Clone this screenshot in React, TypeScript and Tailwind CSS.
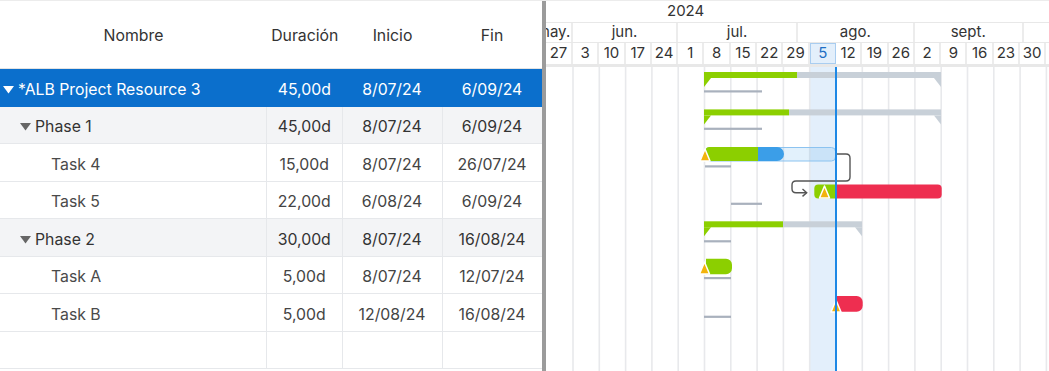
import clsx from "clsx";

type Row = {
  name: string;
  dur: string;
  start: string;
  end: string;
  kind: "root" | "phase" | "task";
};

const rows: Row[] = [
  { name: "*ALB Project Resource 3", dur: "45,00d", start: "8/07/24", end: "6/09/24", kind: "root" },
  { name: "Phase 1", dur: "45,00d", start: "8/07/24", end: "6/09/24", kind: "phase" },
  { name: "Task 4", dur: "15,00d", start: "8/07/24", end: "26/07/24", kind: "task" },
  { name: "Task 5", dur: "22,00d", start: "6/08/24", end: "6/09/24", kind: "task" },
  { name: "Phase 2", dur: "30,00d", start: "8/07/24", end: "16/08/24", kind: "phase" },
  { name: "Task A", dur: "5,00d", start: "8/07/24", end: "12/07/24", kind: "task" },
  { name: "Task B", dur: "5,00d", start: "12/08/24", end: "16/08/24", kind: "task" },
];

const weeks = ["3", "10", "17", "24", "1", "8", "15", "22", "29", "5", "12", "19", "26", "2", "9", "16", "23", "30"];

const GREEN = "#8ccf00";
const GRAY = "#c8d0d8";
const RED = "#ee2e50";

function Caret({ color }: { color: string }) {
  return (
    <svg width="11" height="8" viewBox="0 0 11 8" className="shrink-0">
      <polygon points="0,0 11,0 5.5,7.5" fill={color} />
    </svg>
  );
}

function GridRow({ row }: { row: Row }) {
  const root = row.kind === "root";
  const cell = clsx(
    "flex items-center justify-center border-r pt-[5px]",
    root ? "border-[#0b6fcc]" : "border-[#e6e8eb]"
  );
  return (
    <div
      className={clsx(
        "flex h-[37.5px] shrink-0 border-b text-[15.8px]",
        root && "border-[#0b6fcc] bg-[#0b6fcc] text-white",
        row.kind === "phase" && "border-[#e6e8eb] bg-[#f3f4f6] text-[#333]",
        row.kind === "task" && "border-[#e6e8eb] bg-white text-[#444]"
      )}
    >
      <div className={clsx(cell, "w-[267px] justify-start")}>
        {root && (
          <div className="flex items-center gap-[4px] pl-[3px]">
            <Caret color="#fff" />
            <span>{row.name}</span>
          </div>
        )}
        {row.kind === "phase" && (
          <div className="flex items-center gap-[4px] pl-[20px]">
            <Caret color="#666" />
            <span>{row.name}</span>
          </div>
        )}
        {row.kind === "task" && <span className="pl-[51px] text-[#4a4a4a]">{row.name}</span>}
      </div>
      <div className={clsx(cell, "w-[75.5px]")}>{row.dur}</div>
      <div className={clsx(cell, "w-[100px]")}>{row.start}</div>
      <div className={clsx(cell, "w-[99px] border-r-0")}>{row.end}</div>
    </div>
  );
}

function Summary({ x1, x2, xp, y }: { x1: number; x2: number; xp: number; y: number }) {
  return (
    <g>
      <rect x={x1} y={y} width={xp - x1} height={6} fill={GREEN} />
      <rect x={xp} y={y} width={x2 - xp} height={6} fill={GRAY} />
      <polygon points={`${x1},${y + 6} ${x1 + 7},${y + 6} ${x1},${y + 15}`} fill={GREEN} />
      <polygon points={`${x2},${y + 6} ${x2 - 7},${y + 6} ${x2},${y + 15}`} fill={GRAY} />
    </g>
  );
}

function Baseline({ x1, x2, y }: { x1: number; x2: number; y: number }) {
  return <rect x={x1} y={y} width={x2 - x1} height={2.2} fill="#a9b1bd" />;
}

function Warn({ x, y }: { x: number; y: number }) {
  return (
    <polygon
      points={`${x},${y} ${x - 5},${y + 12} ${x + 5},${y + 12}`}
      fill="#f2b30c"
      stroke="#fff"
      strokeWidth={1.5}
      strokeLinejoin="round"
    />
  );
}

function GanttBody() {
  const lines = Array.from({ length: 19 }, (_, k) => 27 + 26.3 * k);
  return (
    <svg width="503" height="305" className="block">
      <rect x={263.7} y={0} width={25.5} height={305} fill="#e3effb" />
      {lines.map((x) => (
        <rect key={x} x={x - 0.8} y={0} width={1.6} height={305} fill="#e8e9ec" />
      ))}

      {/* root summary */}
      <Summary x1={158} x2={395} xp={251} y={5} />
      <Baseline x1={158} x2={216} y={23.3} />

      {/* phase 1 */}
      <Summary x1={158} x2={395} xp={243} y={42.4} />
      <Baseline x1={158} x2={216} y={60.7} />

      {/* task 4 */}
      <rect x={159.5} y={80.5} width={130} height={13.5} rx={4} fill="#3b9ee8" fillOpacity={0.15} stroke="#8cc3f0" />
      <path d="M163.5 80 H212 V94 H163.5 A4 4 0 0 1 159.5 90 V84 A4 4 0 0 1 163.5 80 Z" fill={GREEN} />
      <path d="M212 80 H231 A7 7 0 0 1 231 94 H212 Z" fill="#3b9ee8" />
      <Warn x={159} y={82} />
      <Baseline x1={159} x2={185} y={98.3} />

      {/* link task 4 -> task 5 */}
      <path
        d="M290 87 H300 Q304 87 304 91 V110 Q304 114 300 114 H250 Q246 114 246 118 V121.7 Q246 125.7 250 125.7 H260.5"
        fill="none"
        stroke="#555"
        strokeWidth={1.4}
      />
      <path d="M256.5 122 L260.7 125.7 L256.5 129.4" fill="none" stroke="#555" strokeWidth={1.4} />

      {/* task 5 */}
      <path d="M272.3 117.5 H290 V131.5 H272.3 A4 4 0 0 1 268.3 127.5 V121.5 A4 4 0 0 1 272.3 117.5 Z" fill={GREEN} />
      <path d="M290 117.5 H391.7 A4 4 0 0 1 395.7 121.5 V127.5 A4 4 0 0 1 391.7 131.5 H290 Z" fill={RED} />
      <Warn x={278.5} y={119} />
      <Baseline x1={185} x2={216} y={135.7} />

      {/* phase 2 */}
      <Summary x1={158} x2={316} xp={237} y={154.3} />
      <Baseline x1={158} x2={185} y={173.2} />

      {/* task A */}
      <path d="M160 191.7 H180 A6 6 0 0 1 186 197.7 V201.3 A6 6 0 0 1 180 207.3 H160 Z" fill={GREEN} />
      <Warn x={158.5} y={195} />
      <Baseline x1={158} x2={185} y={210} />

      {/* task B */}
      <path d="M290.7 229 H310.7 A6 6 0 0 1 316.7 235 V238.7 A6 6 0 0 1 310.7 244.7 H290.7 Z" fill={RED} />
      <Warn x={290} y={233} />
      <Baseline x1={158} x2={185} y={248.7} />

      <rect x={289} y={0} width={2} height={305} fill="#1e88e5" />
    </svg>
  );
}

function GanttHeader() {
  return (
    <div className="flex shrink-0 flex-col text-[15px] text-[#333]">
      <div className="flex h-[22px] items-center border-b border-[#e8e8e8] pl-[121px]">2024</div>
      <div className="flex h-[20px] overflow-hidden border-b border-[#e8e8e8]">
        <div className="ml-[-10px] flex w-[37px] shrink-0 items-center justify-center border-r-2 border-[#ececec]">
          may.
        </div>
        <div className="flex w-[105px] shrink-0 items-center justify-center border-r-2 border-[#ececec]">jun.</div>
        <div className="flex w-[120px] shrink-0 items-center justify-center border-r-2 border-[#ececec]">jul.</div>
        <div className="flex w-[116.5px] shrink-0 items-center justify-center border-r-2 border-[#ececec]">ago.</div>
        <div className="flex w-[109.5px] shrink-0 items-center justify-center border-r-2 border-[#ececec]">sept.</div>
        <div className="w-[60px] shrink-0" />
      </div>
      <div className="flex h-[21px] overflow-hidden">
        <div className="flex w-[27px] shrink-0 items-center justify-center border-r-2 border-[#ececec]">27</div>
        {weeks.map((w, i) =>
          i === 9 ? (
            <div
              key={i}
              className="flex w-[26.3px] shrink-0 items-center justify-center border border-[#a9cdf0] bg-[#e3effb] text-[#1f6fc4]"
            >
              {w}
            </div>
          ) : (
            <div key={i} className="flex w-[26.3px] shrink-0 items-center justify-center border-r-2 border-[#ececec]">
              {w}
            </div>
          )
        )}
        <div className="w-[30px] shrink-0" />
      </div>
      <div className="h-[3px] bg-[#e8e8e8]" />
    </div>
  );
}

export default function App() {
  return (
    <div className="flex h-[371px] w-[1049px] overflow-hidden border-t border-[#ececec] bg-white font-[Inter,sans-serif]">
      <div className="flex w-[541.5px] shrink-0 flex-col">
        <div className="flex h-[68px] shrink-0 items-center border-b border-[#e3e3e3] pt-[3px] text-[15.8px] text-[#333]">
          <div className="w-[267px] text-center">Nombre</div>
          <div className="w-[75.5px] text-center">Duración</div>
          <div className="w-[100px] text-center">Inicio</div>
          <div className="w-[99px] text-center">Fin</div>
        </div>
        {rows.map((r) => (
          <GridRow key={r.name} row={r} />
        ))}
        <div className="flex h-[37.5px] shrink-0 border-b border-[#e6e8eb]">
          <div className="w-[267px] border-r border-[#e6e8eb]" />
          <div className="w-[75.5px] border-r border-[#e6e8eb]" />
          <div className="w-[100px] border-r border-[#e6e8eb]" />
          <div className="w-[99px]" />
        </div>
      </div>
      <div className="w-[4.5px] shrink-0 bg-[#9b9b9b]" />
      <div className="flex min-w-0 flex-1 flex-col">
        <GanttHeader />
        <GanttBody />
      </div>
    </div>
  );
}
